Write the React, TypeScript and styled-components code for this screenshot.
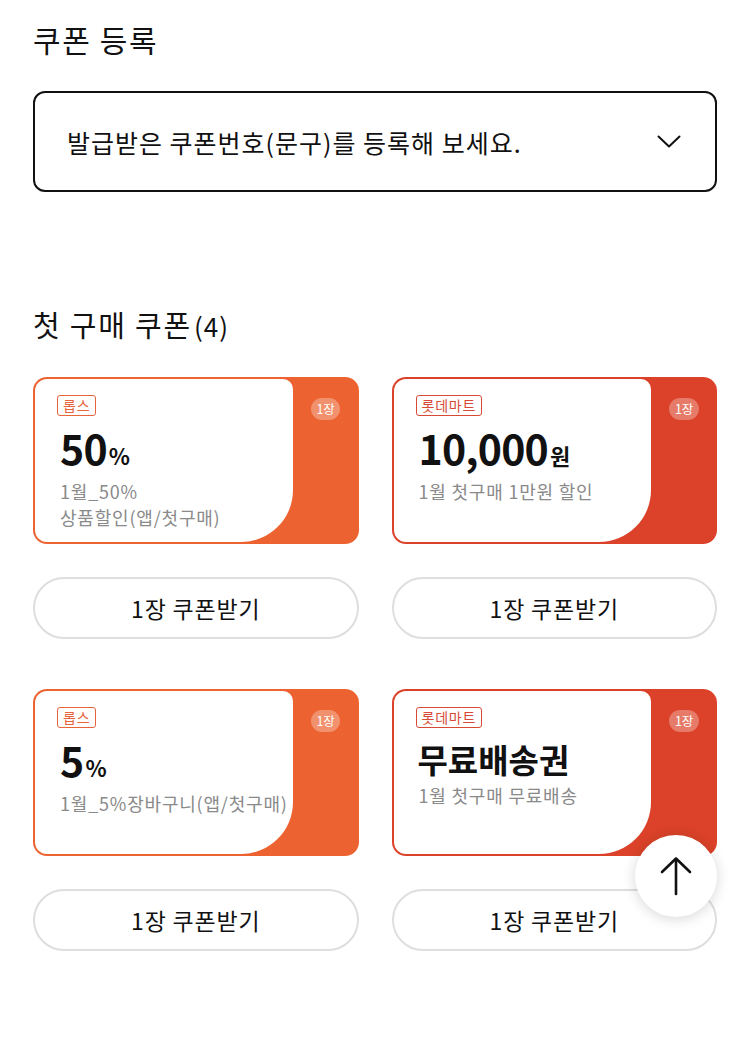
import React from "react";
import styled, { createGlobalStyle } from "styled-components";

const GlobalStyle = createGlobalStyle`
  html, body { margin: 0; padding: 0; background: #fff; }
  body {
    font-family: "Noto Sans CJK KR", "Noto Sans", sans-serif;
    color: #111;
    -webkit-font-smoothing: antialiased;
  }
  * { box-sizing: border-box; }
`;

const Page = styled.main`
  padding: 19px 33px 108px;
  display: flex;
  flex-direction: column;
`;

const Title = styled.h2`
  margin: 0;
  font-size: 30px;
  line-height: 40px;
  font-weight: 400;
  letter-spacing: 1.6px;
`;

const SectionTitle = styled(Title)`
  margin-top: 112px;
  display: flex;
  align-items: baseline;
  font-size: 29px;
  letter-spacing: 1.8px;
`;

const Count = styled.span`
  margin-left: 2px;
  font-size: 26px;
  letter-spacing: 1px;
`;

const Select = styled.button`
  margin-top: 32px;
  height: 101px;
  border: 2px solid #111;
  border-radius: 12px;
  background: #fff;
  padding: 0 34px 0 32px;
  display: flex;
  align-items: center;
  justify-content: space-between;
  font-family: inherit;
  font-size: 25px;
  color: #111;
  letter-spacing: 1px;
  cursor: pointer;
`;

const Grid = styled.div`
  margin-top: 31px;
  display: grid;
  grid-template-columns: 1fr 1fr;
  column-gap: 33px;
  row-gap: 50px;
`;

const Item = styled.div`
  display: flex;
  flex-direction: column;
  gap: 33px;
`;

const Card = styled.div<{ $color: string }>`
  height: 167px;
  border-radius: 14px;
  background: ${(p) => p.$color};
  display: flex;
  padding: 2px 0 2px 2px;
`;

const Panel = styled.div`
  flex: 1;
  background: #fff;
  border-radius: 12px 10px 52px 12px;
  padding: 16px 0 0 22px;
  display: flex;
  flex-direction: column;
  align-items: flex-start;
  min-width: 0;
`;

const Side = styled.div`
  width: 66px;
  display: flex;
  justify-content: center;
  padding-top: 19px;
`;

const Qty = styled.span`
  height: 22px;
  padding: 0 6px;
  border-radius: 11px;
  background: rgba(255, 255, 255, 0.3);
  color: #fff;
  font-size: 12.5px;
  line-height: 22px;
  letter-spacing: -0.3px;
`;

const Tag = styled.span<{ $color: string }>`
  height: 21px;
  padding: 0 5px;
  border: 1.5px solid ${(p) => p.$color};
  border-radius: 3px;
  color: ${(p) => p.$color};
  font-size: 14px;
  line-height: 18px;
  letter-spacing: 0.8px;
`;

const Amount = styled.div`
  margin: 6px 0 0 3px;
  font-size: 41px;
  line-height: 50px;
  font-weight: 700;
  letter-spacing: -0.8px;
  display: flex;
  align-items: baseline;
`;

const Unit = styled.span`
  font-size: 22px;
  font-weight: 700;
  margin-left: 2px;
  letter-spacing: 0;
`;

const Name = styled.div`
  margin: 6px 0 0 2px;
  font-size: 33px;
  line-height: 50px;
  font-weight: 700;
  letter-spacing: 0;
`;

const Desc = styled.div`
  margin: -2px 0 0 3px;
  font-size: 18px;
  line-height: 26px;
  color: #8a8a8a;
  letter-spacing: 0.8px;
  white-space: nowrap;
`;

const GetButton = styled.button`
  height: 62px;
  border: 2px solid #dedede;
  border-radius: 31px;
  background: #fff;
  font-family: inherit;
  font-size: 23px;
  color: #111;
  letter-spacing: 0.8px;
  cursor: pointer;
`;

const TopButton = styled.button`
  position: fixed;
  right: 33px;
  bottom: 142px;
  width: 82px;
  height: 82px;
  border-radius: 50%;
  border: none;
  background: #fff;
  box-shadow: 0 2px 14px rgba(0, 0, 0, 0.16);
  display: flex;
  align-items: center;
  justify-content: center;
  cursor: pointer;
`;

type Coupon = {
  brand: string;
  color: string;
  tagColor: string;
  amount?: string;
  unit?: string;
  name?: string;
  desc: string[];
};

const ORANGE = "#ec6230";
const RED = "#db4229";

const coupons: Coupon[] = [
  { brand: "롭스", color: ORANGE, tagColor: "#e6643c", amount: "50", unit: "%", desc: ["1월_50%", "상품할인(앱/첫구매)"] },
  { brand: "롯데마트", color: RED, tagColor: "#d74a35", amount: "10,000", unit: "원", desc: ["1월 첫구매 1만원 할인"] },
  { brand: "롭스", color: ORANGE, tagColor: "#e6643c", amount: "5", unit: "%", desc: ["1월_5%장바구니(앱/첫구매)"] },
  { brand: "롯데마트", color: RED, tagColor: "#d74a35", name: "무료배송권", desc: ["1월 첫구매 무료배송"] },
];

const Chevron = () => (
  <svg width="24" height="14" viewBox="0 0 24 14" fill="none">
    <polyline points="1.5,1.5 12,11.5 22.5,1.5" stroke="#111" strokeWidth="2" strokeLinecap="round" strokeLinejoin="round" />
  </svg>
);

const ArrowUp = () => (
  <svg width="34" height="40" viewBox="0 0 34 40" fill="none">
    <line x1="17" y1="3" x2="17" y2="38" stroke="#111" strokeWidth="2.6" strokeLinecap="round" />
    <polyline points="3,16 17,2.5 31,16" stroke="#111" strokeWidth="2.6" strokeLinecap="round" strokeLinejoin="round" />
  </svg>
);

export default function App() {
  return (
    <>
      <GlobalStyle />
      <Page>
        <Title>쿠폰 등록</Title>
        <Select type="button">
          <span>발급받은 쿠폰번호(문구)를 등록해 보세요.</span>
          <Chevron />
        </Select>

        <SectionTitle>
          첫 구매 쿠폰<Count>(4)</Count>
        </SectionTitle>

        <Grid>
          {coupons.map((c, i) => (
            <Item key={i}>
              <Card $color={c.color}>
                <Panel>
                  <Tag $color={c.tagColor}>{c.brand}</Tag>
                  {c.name ? (
                    <Name>{c.name}</Name>
                  ) : (
                    <Amount>
                      {c.amount}
                      <Unit>{c.unit}</Unit>
                    </Amount>
                  )}
                  <Desc>
                    {c.desc.map((d, j) => (
                      <div key={j}>{d}</div>
                    ))}
                  </Desc>
                </Panel>
                <Side>
                  <Qty>1장</Qty>
                </Side>
              </Card>
              <GetButton type="button">1장 쿠폰받기</GetButton>
            </Item>
          ))}
        </Grid>
      </Page>
      <TopButton type="button" aria-label="맨 위로">
        <ArrowUp />
      </TopButton>
    </>
  );
}
